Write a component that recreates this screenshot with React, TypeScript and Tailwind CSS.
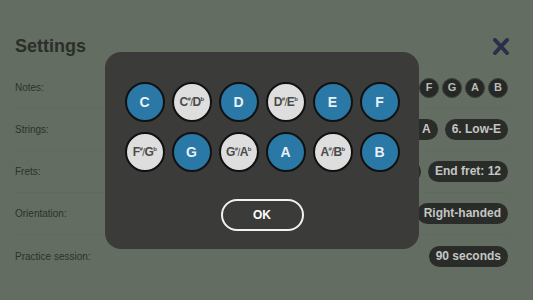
const blue = ["C", "D", "E", "F", "G", "A", "B"];

const notes: { name: string; sharp?: [string, string] }[] = [
  { name: "C" },
  { name: "C#", sharp: ["C", "D"] },
  { name: "D" },
  { name: "D#", sharp: ["D", "E"] },
  { name: "E" },
  { name: "F" },
  { name: "F#", sharp: ["F", "G"] },
  { name: "G" },
  { name: "G#", sharp: ["G", "A"] },
  { name: "A" },
  { name: "A#", sharp: ["A", "B"] },
  { name: "B" },
];

function Pill({ children }: { children: React.ReactNode }) {
  return (
    <span className="h-[21px] px-[7px] rounded-full bg-[#2a2c29] text-[#c4c6c3] text-[12px] font-bold leading-[21px] whitespace-nowrap">
      {children}
    </span>
  );
}

function Row({ label, children }: { label: string; children: React.ReactNode }) {
  return (
    <div className="h-[42px] flex items-center justify-between border-b border-[#616a5e]">
      <span className="text-[10px] text-[#2c322c]">{label}</span>
      <div className="flex items-center gap-[7px]">{children}</div>
    </div>
  );
}

export default function App() {
  return (
    <div
      className="relative w-[533px] h-[300px] overflow-hidden bg-[#646d61]"
      style={{ fontFamily: '"Liberation Sans", Arial, sans-serif' }}
    >
      <div className="pl-[15px] pr-[25px] pt-[34px]">
        <div className="flex items-center justify-between h-[24px] mb-[9px]">
          <h1 className="text-[18px] font-bold text-[#2a2f2a]">Settings</h1>
          <svg width="16" height="17" viewBox="0 0 16 17" className="mr-[-1px]">
            <path d="M2 2 L14 15 M14 2 L2 15" stroke="#2c2f47" strokeWidth="4" strokeLinecap="round" />
          </svg>
        </div>
        <Row label="Notes:">
          <div className="flex items-center gap-[3px]">
            {["F", "G", "A", "B"].map((n) => (
              <span
                key={n}
                className="w-[20px] h-[20px] rounded-full bg-[#262826] border border-[#3a3d39] text-[#b9bbb8] text-[11px] font-bold flex items-center justify-center"
              >
                {n}
              </span>
            ))}
          </div>
        </Row>
        <Row label="Strings:">
          <Pill>5. A</Pill>
          <Pill>6. Low-E</Pill>
        </Row>
        <Row label="Frets:">
          <Pill>Start fret: 0</Pill>
          <Pill>End fret: 12</Pill>
        </Row>
        <Row label="Orientation:">
          <Pill>Right-handed</Pill>
        </Row>
        <div className="h-[42px] flex items-center justify-between">
          <span className="text-[10px] text-[#2c322c]">Practice session:</span>
          <Pill>90 seconds</Pill>
        </div>
      </div>

      {/* note picker dialog */}
      <div className="absolute left-[105px] top-[52px] w-[314px] h-[197px] rounded-[16px] bg-[#3b3c3a] flex flex-col items-center pt-[30px]">
        <div className="grid grid-cols-6 gap-x-[7px] gap-y-[10px]">
          {notes.map((n) => {
            const on = blue.includes(n.name);
            return (
              <div
                key={n.name}
                className={
                  "w-[40px] h-[40px] rounded-full border-[2px] border-[#111] flex items-center justify-center font-bold " +
                  (on ? "bg-[#2a78a6] text-[#e8f0f5] text-[14px]" : "bg-[#dedede] text-[#4a4a4a] text-[12px] tracking-[-0.6px]")
                }
              >
                {n.sharp ? (
                  <span className="whitespace-nowrap">
                    {n.sharp[0]}
                    <sup className="text-[6px] top-[-5px]">#</sup>
                    <span className="text-[10px] font-normal">/</span>
                    {n.sharp[1]}
                    <sup className="text-[6px] top-[-5px]">b</sup>
                  </span>
                ) : (
                  n.name
                )}
              </div>
            );
          })}
        </div>
        <button className="mt-[27px] w-[83px] h-[32px] rounded-full border-[2.5px] border-[#f2f2f2] text-white text-[12px] font-bold">
          OK
        </button>
      </div>
    </div>
  );
}
